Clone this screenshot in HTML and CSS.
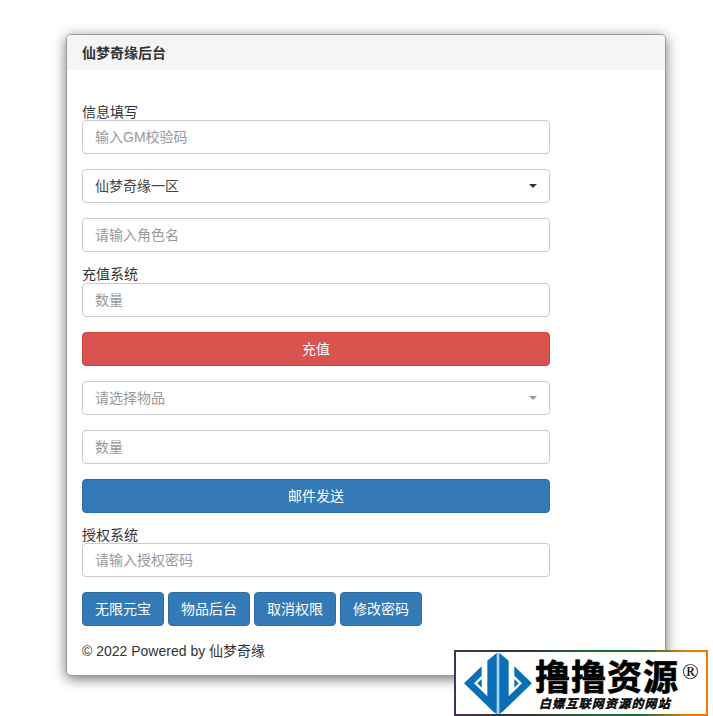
FILE: index.html
```html
<!DOCTYPE html>
<html>
<head>
    <title>仙梦奇缘后台</title>
    <link rel="stylesheet" href="styles.css">
</head>
<body>
    <div class="panel">
        <div class="panel-heading">仙梦奇缘后台</div>
        <div class="panel-body">
            <div class="form">
                <label class="group-label">信息填写</label>
                <input class="form-control" autocomplete="off" placeholder="输入GM校验码" />
                <div class="form-control select-box">
                    <span>仙梦奇缘一区</span>
                    <i class="caret"></i>
                </div>
                <input class="form-control" autocomplete="off" placeholder="请输入角色名" />

                <label class="group-label">充值系统</label>
                <input class="form-control" autocomplete="off" placeholder="数量" />
                <button class="btn btn-block btn-danger">充值</button>
                <div class="form-control select-box is-empty">
                    <span>请选择物品</span>
                    <i class="caret"></i>
                </div>
                <input class="form-control" autocomplete="off" placeholder="数量" />
                <button class="btn btn-block btn-primary">邮件发送</button>

                <label class="group-label">授权系统</label>
                <input class="form-control" autocomplete="off" placeholder="请输入授权密码" />
                <div class="btn-row">
                    <button class="btn btn-primary">无限元宝</button>
                    <button class="btn btn-primary">物品后台</button>
                    <button class="btn btn-primary">取消权限</button>
                    <button class="btn btn-primary">修改密码</button>
                </div>
            </div>
            <div class="copyright">© 2022 Powered by 仙梦奇缘</div>
        </div>
    </div>

    <!-- watermark over the corner -->
    <div class="watermark">
        <svg class="watermark-logo" viewBox="36 22 216 183" width="72" height="61">
            <path fill="#a9d3ee" d="M138 22H150V205H138Z"/>
            <path fill="#0b6fb8" d="M95 62 L42 113 L130 198 L140 205 L140 22 L112 45 L112 152 L72 113 L95 90 Z"/>
            <path fill="#0b6fb8" d="M193 62 L246 113 L158 198 L148 205 L148 22 L176 45 L176 152 L216 113 L193 90 Z"/>
            <path fill="#0b6fb8" d="M95 100 L82 113 L95 126 Z"/>
            <path fill="#0b6fb8" d="M193 100 L206 113 L193 126 Z"/>
        </svg>
        <div class="watermark-text">
            <div class="watermark-title">撸撸资源<sup>®</sup></div>
            <div class="watermark-sub">白嫖互联网资源的网站</div>
        </div>
    </div>
</body>
</html>
```

FILE: styles.css
```css
* {
    box-sizing: border-box;
}

body {
    margin: 0;
    height: 716px;
    overflow: hidden;
    background-color: #fff;
    color: #333;
    font-family: "Liberation Sans", "Noto Sans CJK SC", sans-serif;
    font-size: 14px;
    line-height: 20px;
    padding: 34px 47px 0 66px;
}

.panel {
    height: 642px;
    background-color: #fff;
    border: 1px solid #999;
    border-radius: 5px;
    box-shadow: 0 3px 13px rgba(0, 0, 0, 0.55);
}

.panel-heading {
    height: 35px;
    padding: 8px 15px;
    background-color: #f5f5f5;
    border-radius: 4px 4px 0 0;
    font-weight: bold;
}

.panel-body {
    padding: 34.5px 15px 0;
}

.form {
    width: 468px;
    display: flex;
    flex-direction: column;
}

.group-label {
    display: block;
    height: 15.5px;
    line-height: 14px;
}

.form-control {
    display: block;
    width: 100%;
    height: 34px;
    margin-bottom: 15px;
    padding: 6px 12px;
    border: 1px solid #ccc;
    border-radius: 4px;
    background-color: #fff;
    color: #555;
    font-family: inherit;
    font-size: 14px;
    line-height: 20px;
    outline: none;
}

.form-control::placeholder {
    color: #999;
    opacity: 1;
}

.select-box {
    display: flex;
    align-items: center;
    justify-content: space-between;
    color: #444;
    padding-right: 12px;
}

.select-box.is-empty {
    color: #999;
}

.caret {
    width: 0;
    height: 0;
    border-top: 4px solid #333;
    border-left: 4px solid transparent;
    border-right: 4px solid transparent;
}

.is-empty .caret {
    border-top-color: #999;
}

.btn {
    height: 34px;
    padding: 6px 12px;
    border: 1px solid transparent;
    border-radius: 4px;
    color: #fff;
    font-family: inherit;
    font-size: 14px;
    line-height: 20px;
    cursor: pointer;
}

.btn-block {
    display: block;
    width: 100%;
    margin-bottom: 15px;
}

.btn-danger {
    background-color: #d9534f;
    border-color: #d43f3a;
}

.btn-primary {
    background-color: #337ab7;
    border-color: #2e6da4;
}

.btn-row {
    display: flex;
    gap: 4px;
}

.copyright {
    margin-top: 15px;
}

.watermark {
    position: absolute;
    left: 454px;
    top: 650px;
    width: 254px;
    height: 66px;
    display: flex;
    align-items: center;
    background-color: #fff;
    border: 2px solid;
    border-image: linear-gradient(90deg, #4a3050, #333 30%, #1e6e35 55%, #1e6e35 75%, #e87b0c 92%) 1;
}

.watermark-logo {
    flex: none;
    margin-left: 6px;
}

.watermark-text {
    margin: 5px 0 0 1px;
    color: #000;
    font-weight: bold;
}

.watermark-title {
    font-size: 35px;
    line-height: 38px;
    letter-spacing: 1px;
    white-space: nowrap;
    -webkit-text-stroke: 0.7px #000;
}

.watermark-title sup {
    font-family: "Liberation Serif", serif;
    font-size: 22px;
    font-weight: normal;
    line-height: 0;
    margin-left: 3px;
    vertical-align: 11px;
    -webkit-text-stroke: 0;
}

.watermark-sub {
    font-size: 12px;
    font-style: italic;
    line-height: 15px;
    letter-spacing: 1.2px;
    margin-left: 4px;
    white-space: nowrap;
    -webkit-text-stroke: 0.4px #000;
}
```
